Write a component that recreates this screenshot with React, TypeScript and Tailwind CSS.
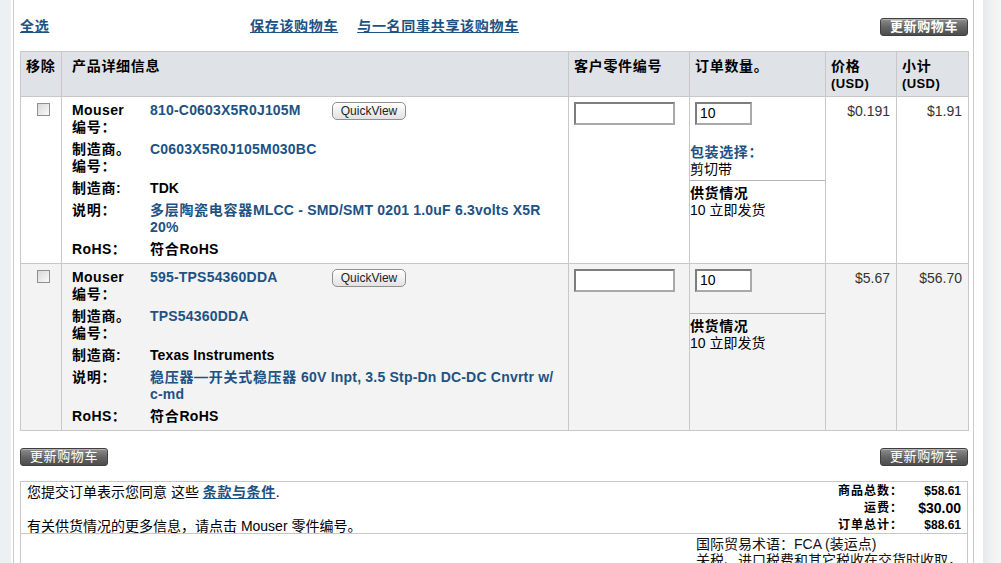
import React from 'react';

interface CartItem {
  mouser: string;
  mfrNo: string;
  mfr: string;
  descCn: string;
  descEn: string;
  descTail: string;
  packaging: boolean;
  price: string;
  subtotal: string;
  rowBg: string;
}

const items: CartItem[] = [
  {
    mouser: '810-C0603X5R0J105M',
    mfrNo: 'C0603X5R0J105M030BC',
    mfr: 'TDK',
    descCn: '多层陶瓷电容器',
    descEn: 'MLCC - SMD/SMT 0201 1.0uF 6.3volts X5R',
    descTail: '20%',
    packaging: true,
    price: '$0.191',
    subtotal: '$1.91',
    rowBg: 'bg-white',
  },
  {
    mouser: '595-TPS54360DDA',
    mfrNo: 'TPS54360DDA',
    mfr: 'Texas Instruments',
    descCn: '稳压器—开关式稳压器',
    descEn: ' 60V Inpt, 3.5 Stp-Dn DC-DC Cnvrtr w/',
    descTail: 'c-md',
    packaging: false,
    price: '$5.67',
    subtotal: '$56.70',
    rowBg: 'bg-[#f3f3f3]',
  },
];

const UpdateButton = () => (
  <button className="w-[88px] h-[18px] rounded-[3px] border border-[#3f3f3f] bg-linear-to-b from-[#8e8e8e] via-[#666666] to-[#4c4c4c] text-white text-[13px] leading-[16px] tracking-[0.6px] shadow-[inset_0_1px_0_rgba(255,255,255,0.35)]">
    更新购物车
  </button>
);

const QuickView = () => (
  <button className="w-[74px] h-[18px] rounded-[5px] border border-[#8f8f8f] bg-linear-to-b from-white to-[#e2e2e2] text-[12px] leading-[16px] text-[#222] font-normal tracking-normal">
    QuickView
  </button>
);

const Checkbox = () => (
  <span className="block w-[13px] h-[13px] border border-[#8e8f8f] bg-linear-to-br from-[#d8d8d8] to-[#fbfbfb]" />
);

const TextBox = ({ w, value }: { w: string; value?: string }) => (
  <div
    className={`${w} h-[23px] bg-white border-2 border-t-[#7d7d7d] border-l-[#7d7d7d] border-r-[#a9a9a9] border-b-[#a9a9a9] pl-[3px] text-[14px] leading-[19px] text-black`}
  >
    {value}
  </div>
);

const th = 'align-top text-left border border-[#c8c8c8] bg-[#dfe2e6] pt-[6px] pb-[4px] font-bold leading-[17px] text-[14px] tracking-[0.7px]';
const td = 'align-top border border-[#c8c8c8]';

const ProductDetails = ({ item }: { item: CartItem }) => (
  <div className="grid grid-cols-[78px_1fr] gap-y-[5px] leading-[17px]">
    <div className="font-bold text-[14px]">
      <span className="tracking-[0.4px]">Mouser</span>
      <br />
      <span className="tracking-[0.7px]">编号：</span>
    </div>
    <div className="flex items-start">
      <span className="w-[182px] font-bold text-[14px] tracking-[0.2px] text-[#1d5283]">{item.mouser}</span>
      <QuickView />
    </div>

    <div className="font-bold text-[14px] tracking-[0.7px]">
      制造商。
      <br />
      编号：
    </div>
    <div className="font-bold text-[14px] tracking-[0.2px] text-[#1d5283]">{item.mfrNo}</div>

    <div className="font-bold text-[14px] tracking-[0.7px]">制造商:</div>
    <div className="font-bold text-[14px] tracking-[0.1px] text-black">{item.mfr}</div>

    <div className="font-bold text-[14px] tracking-[0.7px]">说明：</div>
    <div className="font-bold text-[14px] tracking-[0.2px] text-[#1d5283] whitespace-nowrap">
      <span className="tracking-[0.7px]">{item.descCn}</span>
      {item.descEn}
      <br />
      {item.descTail}
    </div>

    <div className="font-bold text-[14px]">
      <span className="tracking-[0.4px]">RoHS</span>
      <span className="tracking-[0.7px]">：</span>
    </div>
    <div className="font-bold text-[14px] tracking-[0.3px]">
      <span className="tracking-[0.7px]">符合</span>RoHS
    </div>
  </div>
);

export default function App() {
  return (
    <div className="w-[1001px] h-[563px] overflow-hidden flex bg-white text-black text-[14px] font-['Liberation_Sans','Noto_Sans_CJK_SC',sans-serif]">
      <div className="w-[11px] shrink-0 bg-[#edf0f3]" />
      <div className="w-[2px] shrink-0 bg-white" />

      <div className="w-[961px] shrink-0 border-l border-r border-[#c9cdd0] bg-white pl-[6px] pr-[5px]">
        {/* top links */}
        <div className="pt-[17px] h-[35px] flex items-center font-bold text-[14px] tracking-[0.7px] text-[#1d5283]">
          <a className="underline w-[230px]">全选</a>
          <a className="underline mr-[19px]">保存该购物车</a>
          <a className="underline">与一名同事共享该购物车</a>
          <div className="ml-auto">
            <UpdateButton />
          </div>
        </div>

        <table className="mt-[16px] w-[948px] table-fixed border-collapse">
          <colgroup>
            <col className="w-[41px]" />
            <col className="w-[507px]" />
            <col className="w-[121px]" />
            <col className="w-[136px]" />
            <col className="w-[71px]" />
            <col className="w-[72px]" />
          </colgroup>
          <thead>
            <tr>
              <th className={`${th} pl-[5px]`}>移除</th>
              <th className={`${th} pl-[10px]`}>产品详细信息</th>
              <th className={`${th} pl-[5px]`}>客户零件编号</th>
              <th className={`${th} pl-[5px]`}>订单数量。</th>
              <th className={`${th} pl-[5px]`}>
                价格
                <br />
                <span className="text-[13px] tracking-[0.4px]">(USD)</span>
              </th>
              <th className={`${th} pl-[5px]`}>
                小计
                <br />
                <span className="text-[13px] tracking-[0.4px]">(USD)</span>
              </th>
            </tr>
          </thead>
          <tbody>
            {items.map((item) => (
              <tr key={item.mouser} className={item.rowBg}>
                <td className={`${td} pl-[16px] pt-[6px]`}>
                  <Checkbox />
                </td>
                <td className={`${td} pl-[10px] pt-[5px] pb-[5px]`}>
                  <ProductDetails item={item} />
                </td>
                <td className={`${td} pl-[5px] pt-[5px]`}>
                  <TextBox w="w-[101px]" />
                </td>
                <td className={`${td} p-0`}>
                  <div className={`pt-[5px] pl-[5px] ${item.packaging ? 'pb-[19px]' : 'pb-[21px]'}`}>
                    <TextBox w="w-[57px]" value="10" />
                  </div>
                  {item.packaging && (
                    <div className="pb-[2px] leading-[17px]">
                      <div className="font-bold text-[#1d5283] tracking-[0.6px]">包装选择：</div>
                      <div>剪切带</div>
                    </div>
                  )}
                  <div className="border-t border-[#b5b5b5] pt-[4px] leading-[17px]">
                    <div className="font-bold tracking-[0.6px]">供货情况</div>
                    <div>10 立即发货</div>
                  </div>
                </td>
                <td className={`${td} text-right pr-[6px] pt-[6px] leading-[17px] text-[#333]`}>{item.price}</td>
                <td className={`${td} text-right pr-[6px] pt-[6px] leading-[17px] text-[#333]`}>{item.subtotal}</td>
              </tr>
            ))}
          </tbody>
        </table>

        <div className="mt-[17px] w-[948px] flex justify-between">
          <UpdateButton />
          <UpdateButton />
        </div>

        <div className="mt-[15px] w-[948px] border border-[#c8c8c8]">
          <div className="h-[51px] flex leading-[17px]">
            <div className="flex-1 pl-[6px] pt-[2px]">
              <p>
                您提交订单表示您同意 这些{' '}
                <a className="font-bold underline text-[#1d5283] tracking-[0.6px]">条款与条件</a>.
              </p>
              <p className="mt-[17px]">有关供货情况的更多信息，请点击 Mouser 零件编号。</p>
            </div>
            <div className="pr-[6px] pt-[1px] grid grid-cols-[auto_50px] gap-x-[8px] text-right font-bold text-[12px] leading-[17px]">
              <span className="tracking-[1px]">商品总数：</span>
              <span>$58.61</span>
              <span className="tracking-[1px]">运费：</span>
              <span className="text-[14px]">$30.00</span>
              <span className="tracking-[1px]">订单总计：</span>
              <span>$88.61</span>
            </div>
          </div>
          <div className="border-t border-[#c8c8c8] flex pt-[2px] h-[40px]">
            <div className="w-[675px] shrink-0" />
            <div className="leading-[16px] text-[14px] text-[#111]">
              <p>国际贸易术语：FCA (装运点)</p>
              <p>关税、进口税费和其它税收在交货时收取，</p>
            </div>
          </div>
        </div>
      </div>

      <div className="w-[9px] shrink-0 bg-white" />
      <div className="w-[18px] shrink-0 bg-linear-to-r from-[#e6e8ea] via-[#f1f2f3] to-[#f6f6f6]" />
    </div>
  );
}
